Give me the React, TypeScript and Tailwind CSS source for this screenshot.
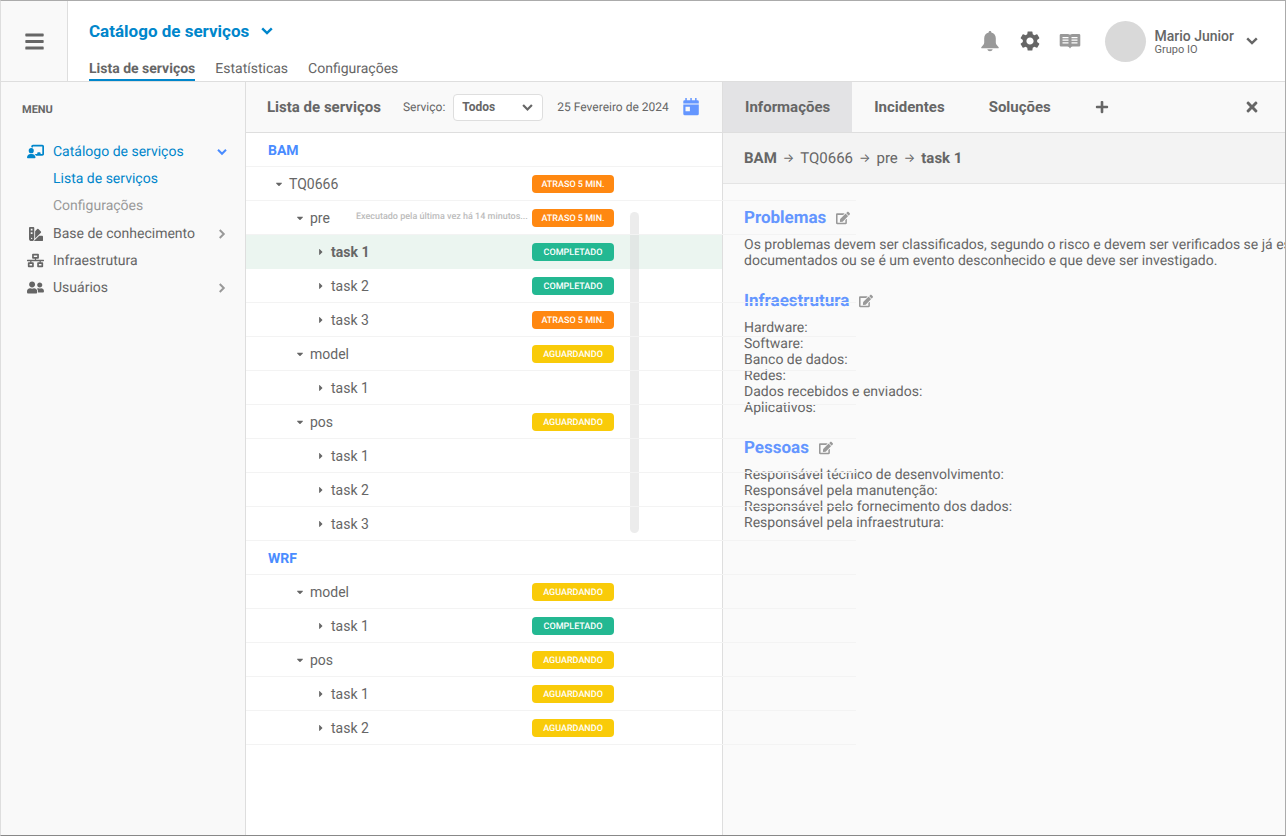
import type { ReactNode } from 'react';
import {
  FaBars, FaSwatchbook, FaNetworkWired, FaUserFriends, FaEdit, FaPlus, FaTimes, FaCaretDown, FaCaretRight,
} from 'react-icons/fa';
import { FaChalkboardUser } from 'react-icons/fa6';
import { MdSettings } from 'react-icons/md';

type Status = 'late' | 'done' | 'waiting';

interface RowData {
  label: string;
  level: number;
  status?: Status;
  note?: string;
  active?: boolean;
  open?: boolean;
}

const rows: RowData[] = [
  { label: 'BAM', level: 0 },
  { label: 'TQ0666', level: 1, open: true, status: 'late' },
  { label: 'pre', level: 2, open: true, status: 'late', note: 'Executado pela última vez há 14 minutos...' },
  { label: 'task 1', level: 3, status: 'done', active: true },
  { label: 'task 2', level: 3, status: 'done' },
  { label: 'task 3', level: 3, status: 'late' },
  { label: 'model', level: 2, open: true, status: 'waiting' },
  { label: 'task 1', level: 3 },
  { label: 'pos', level: 2, open: true, status: 'waiting' },
  { label: 'task 1', level: 3 },
  { label: 'task 2', level: 3 },
  { label: 'task 3', level: 3 },
  { label: 'WRF', level: 0 },
  { label: 'model', level: 2, open: true, status: 'waiting' },
  { label: 'task 1', level: 3, status: 'done' },
  { label: 'pos', level: 2, open: true, status: 'waiting' },
  { label: 'task 1', level: 3, status: 'waiting' },
  { label: 'task 2', level: 3, status: 'waiting' },
];

const statusText = { late: 'ATRASO 5 MIN.', done: 'COMPLETADO', waiting: 'AGUARDANDO' };
const statusColor = { late: 'bg-[#ff8811]', done: 'bg-[#23b892]', waiting: 'bg-[#f9cb09]' };
const indent = ['pl-[22px] pt-px', 'pl-7', 'pl-[49px]', 'pl-[70px]'];

function Chevron({ className = '' }: { className?: string }) {
  return (
    <svg className={className} viewBox="0 0 12 12" fill="none" stroke="currentColor" strokeWidth="2.4" aria-hidden="true">
      <path d="M1.200 3.300 6 8.100l4.800-4.800" />
    </svg>
  );
}

function BellIcon() {
  return (
    <svg width="20" height="22" viewBox="0 0 20 22" fill="currentColor" aria-hidden="true">
      <path d="M10 1c.8 0 1.300.5 1.300 1.200v.4c2.800.6 4.500 2.800 4.500 5.600v4.300c0 1.700 1.200 3 2.700 4.400.5.500.4 1.300-.5 1.300H2c-.9 0-1-.8-.5-1.300 1.500-1.400 2.700-2.700 2.700-4.400V8.200c0-2.800 1.700-5 4.500-5.600v-.4C8.700 1.500 9.200 1 10 1ZM7.300 19.200h5.400c-.3 1.200-1.300 2-2.700 2s-2.400-.8-2.700-2Z" />
    </svg>
  );
}

function BookIcon() {
  return (
    <svg width="22" height="16" viewBox="0 0 22 16" fill="currentColor" aria-hidden="true">
      <path fillRule="evenodd" d="M2 1h6.500q1.800 0 2.500.7.700-.7 2.500-.7H20q1.300 0 1.300 1.300v10q0 1.200-1.300 1.200h-6.500q-1.600 0-2.500 2-.9-2-2.500-2H2q-1.300 0-1.300-1.200v-10Q.7 1 2 1ZM3.500 4v1.200H9.500V4Zm0 2.600v1.200H9.500V6.600Zm0 2.600v1.200H9.500V9.200Zm9-5.200v1.200h6V4Zm0 2.600v1.200h6V6.600Zm0 2.600v1.200h6V9.200Z" />
    </svg>
  );
}

function CalendarIcon() {
  return (
    <svg width="16" height="18" viewBox="0 0 16 18" fill="currentColor" aria-hidden="true">
      <path d="M2.300 0h1.500v2.200H7.300V0h1.500v2.200h3.300V0h1.500v2.200h.9q1.300 0 1.300 1.300v2H.3v-2q0-1.300 1.300-1.300h.7Z" />
      <path fillRule="evenodd" d="M.3 6.500h15.500v9.300q0 1.500-1.500 1.500H1.800q-1.500 0-1.500-1.500ZM2.500 8.800v4.400h4.400V8.800Z" />
    </svg>
  );
}

function Row({ row, index }: { row: RowData; index: number }) {
  const background = row.active ? 'bg-[#ebf5f0]' : '';
  const overlap = index > 0 ? '-right-[134px]' : 'right-0';
  return (
    <li className={`relative flex h-[34px] items-center ${background}`}>
      <div className={`flex flex-1 items-center ${indent[row.level]}`}>
        {row.level === 0 ? (
          <h2 className="text-sm font-bold text-[#4a8cff]">{row.label}</h2>
        ) : (
          <button className={`flex items-center text-sm ${row.active ? 'font-bold' : ''}`}>
            <span className="w-[15px] text-[10px]">{row.open ? <FaCaretDown /> : <FaCaretRight />}</span>
            {row.label}
          </button>
        )}
        {row.note && <span className="ml-[26px] text-[9px] font-medium text-[#bcbcbc]">{row.note}</span>}
      </div>
      {row.status && (
        <span className={`mr-[108px] h-[18px] w-[82px] rounded pt-px text-center text-[9px] leading-[18px] font-medium text-white ${statusColor[row.status]}`}>
          {statusText[row.status]}
        </span>
      )}
      {!row.active && <span className={`pointer-events-none absolute bottom-0 left-0 z-10 h-px bg-[#f3f3f3] ${overlap}`} />}
    </li>
  );
}

function Section({ title, lines }: { title: string; lines: string[] }) {
  return (
    <section>
      <div className="mb-[9px] flex items-center gap-[10px]">
        <h2 className="text-[17px] leading-5 font-bold text-[#6496ff]">{title}</h2>
        <button aria-label={`Editar ${title}`} className="text-sm text-[#999]"><FaEdit /></button>
      </div>
      {lines.map((line) => <p key={line} className="text-sm leading-4 whitespace-nowrap">{line}</p>)}
    </section>
  );
}

function MenuItem({ icon, label, arrow }: { icon: ReactNode; label: string; arrow?: boolean }) {
  return (
    <li>
      <a href="#" className="flex h-[27px] items-center pr-[18px] pl-[26px]">
        <span className="flex w-[26px] text-[17px]">{icon}</span>
        <span className="flex-1">{label}</span>
        {arrow && <Chevron className="size-[10px] -rotate-90 text-[#999]" />}
      </a>
    </li>
  );
}

function Arrow() {
  return <span className="font-['Inter',sans-serif] text-xs">→</span>;
}

export default function App() {
  return (
    <div className="flex min-h-screen flex-col overflow-hidden border border-[#ababab] border-b-[#888] border-l-[#dedede] bg-white font-['Roboto',sans-serif] text-[#666] [text-rendering:geometricPrecision]">
      <header className="flex h-[81px] border-b border-[#dedede]">
        <button aria-label="Abrir menu" className="flex w-[67px] items-center justify-center border-r border-[#dedede] bg-[#f9f9f9] text-[21px]"><FaBars /></button>
        <div className="flex flex-1 flex-col justify-between pl-[21px]">
          <button className="mt-5 flex items-center gap-3 text-[17px] leading-5 font-bold text-[#0086cb]">
            Catálogo de serviços <Chevron className="size-3" />
          </button>
          <nav className="flex gap-5 text-sm leading-5">
            <a href="#" className="border-b-2 border-[#0086cb] font-bold">Lista de serviços</a>
            <a href="#">Estatísticas</a>
            <a href="#">Configurações</a>
          </nav>
        </div>
        <div className="flex items-center pr-[27px]">
          <button aria-label="Notificações" className="mr-[18px] text-[#999]"><BellIcon /></button>
          <button aria-label="Ajustes" className="mr-[17px] text-2xl"><MdSettings /></button>
          <button aria-label="Manual" className="mr-6 text-[#999]"><BookIcon /></button>
          <span className="mr-2 size-[41px] rounded-full bg-[#d9d9d9]" />
          <button className="flex items-center gap-3 text-left">
            <span className="pt-px">
              <span className="block text-sm leading-4 font-medium">Mario Junior</span>
              <span className="block text-[11px] leading-3">Grupo IO</span>
            </span>
            <Chevron className="size-3" />
          </button>
        </div>
      </header>
      <div className="flex flex-1">
        <aside className="w-[245px] shrink-0 border-r border-[#dedede] bg-[#f9f9f9] text-sm">
          <h2 className="pt-5 pl-[21px] text-[11px] leading-4 font-bold">MENU</h2>
          <ul className="mt-5">
            <li className="text-[#0086cb]">
              <a href="#" className="flex h-[27px] items-center pr-[18px] pl-[26px]">
                <span className="w-[26px] text-[17px]"><FaChalkboardUser /></span>
                <span className="flex-1">Catálogo de serviços</span>
                <Chevron className="size-[10px] text-[#4a8cff]" />
              </a>
              <a href="#" className="flex h-[27px] items-center pl-[52px]">Lista de serviços</a>
              <a href="#" className="flex h-7 items-center pl-[52px] text-[#999]">Configurações</a>
            </li>
            <MenuItem icon={<FaSwatchbook className="ml-0.5 size-[14px]" />} label="Base de conhecimento" arrow />
            <MenuItem icon={<FaNetworkWired />} label="Infraestrutura" />
            <MenuItem icon={<FaUserFriends />} label="Usuários" arrow />
          </ul>
        </aside>
        <main className="relative w-[476px] shrink-0">
          <div className="flex h-[51px] items-center border-b border-[#dedede] bg-[#f9f9f9] pl-[21px]">
            <h1 className="mr-[22px] text-[15px] font-bold">Lista de serviços</h1>
            <label htmlFor="service" className="mr-2 text-xs">Serviço:</label>
            <div className="relative mr-[14px]">
              <select id="service" className="h-[27px] w-[90px] appearance-none rounded-sm border border-[#dedede] bg-white pl-2 text-xs font-bold"><option>Todos</option></select>
              <Chevron className="pointer-events-none absolute top-2 right-[10px] size-[11px]" />
            </div>
            <span className="mr-[14px] text-xs">25 Fevereiro de 2024</span>
            <button aria-label="Escolher data" className="text-[#6496ff]"><CalendarIcon /></button>
          </div>
          <ul>{rows.map((row, index) => <Row key={index} row={row} index={index} />)}</ul>
          <div className="absolute top-[130px] right-[83px] h-[321px] w-[9px] rounded-full bg-[#d9d9d9]/50" />
        </main>
        <aside className="min-w-0 flex-1 overflow-hidden border-l border-[#dedede] bg-[#fafafa]">
          <div className="flex h-[51px] items-center border-b border-[#dedede] bg-[#f9f9f9] text-[15px] font-bold">
            <button className="h-full bg-[#e3e3e5] px-[22px]">Informações</button>
            <button className="px-[22px]">Incidentes</button>
            <button className="px-[22px]">Soluções</button>
            <button aria-label="Adicionar" className="px-[22px] text-sm"><FaPlus /></button>
            <button aria-label="Fechar" className="mr-[25px] ml-auto text-base"><FaTimes /></button>
          </div>
          <div className="flex h-[51px] items-center gap-[6px] border-b border-[#e4e4e4] bg-[#f3f3f3] pl-[21px] text-[15px]">
            <b>BAM</b><Arrow /><span>TQ0666</span><Arrow /><span>pre</span><Arrow /><b>task 1</b>
          </div>
          <div className="flex flex-col gap-[22px] pt-6 pl-[21px]">
            <Section title="Problemas" lines={['Os problemas devem ser classificados, segundo o risco e devem ser verificados se já estão', 'documentados ou se é um evento desconhecido e que deve ser investigado.']} />
            <Section title="Infraestrutura" lines={['Hardware:', 'Software:', 'Banco de dados:', 'Redes:', 'Dados recebidos e enviados:', 'Aplicativos:']} />
            <Section title="Pessoas" lines={['Responsável técnico de desenvolvimento:', 'Responsável pela manutenção:', 'Responsável pelo fornecimento dos dados:', 'Responsável pela infraestrutura:']} />
          </div>
        </aside>
      </div>
    </div>
  );
}
